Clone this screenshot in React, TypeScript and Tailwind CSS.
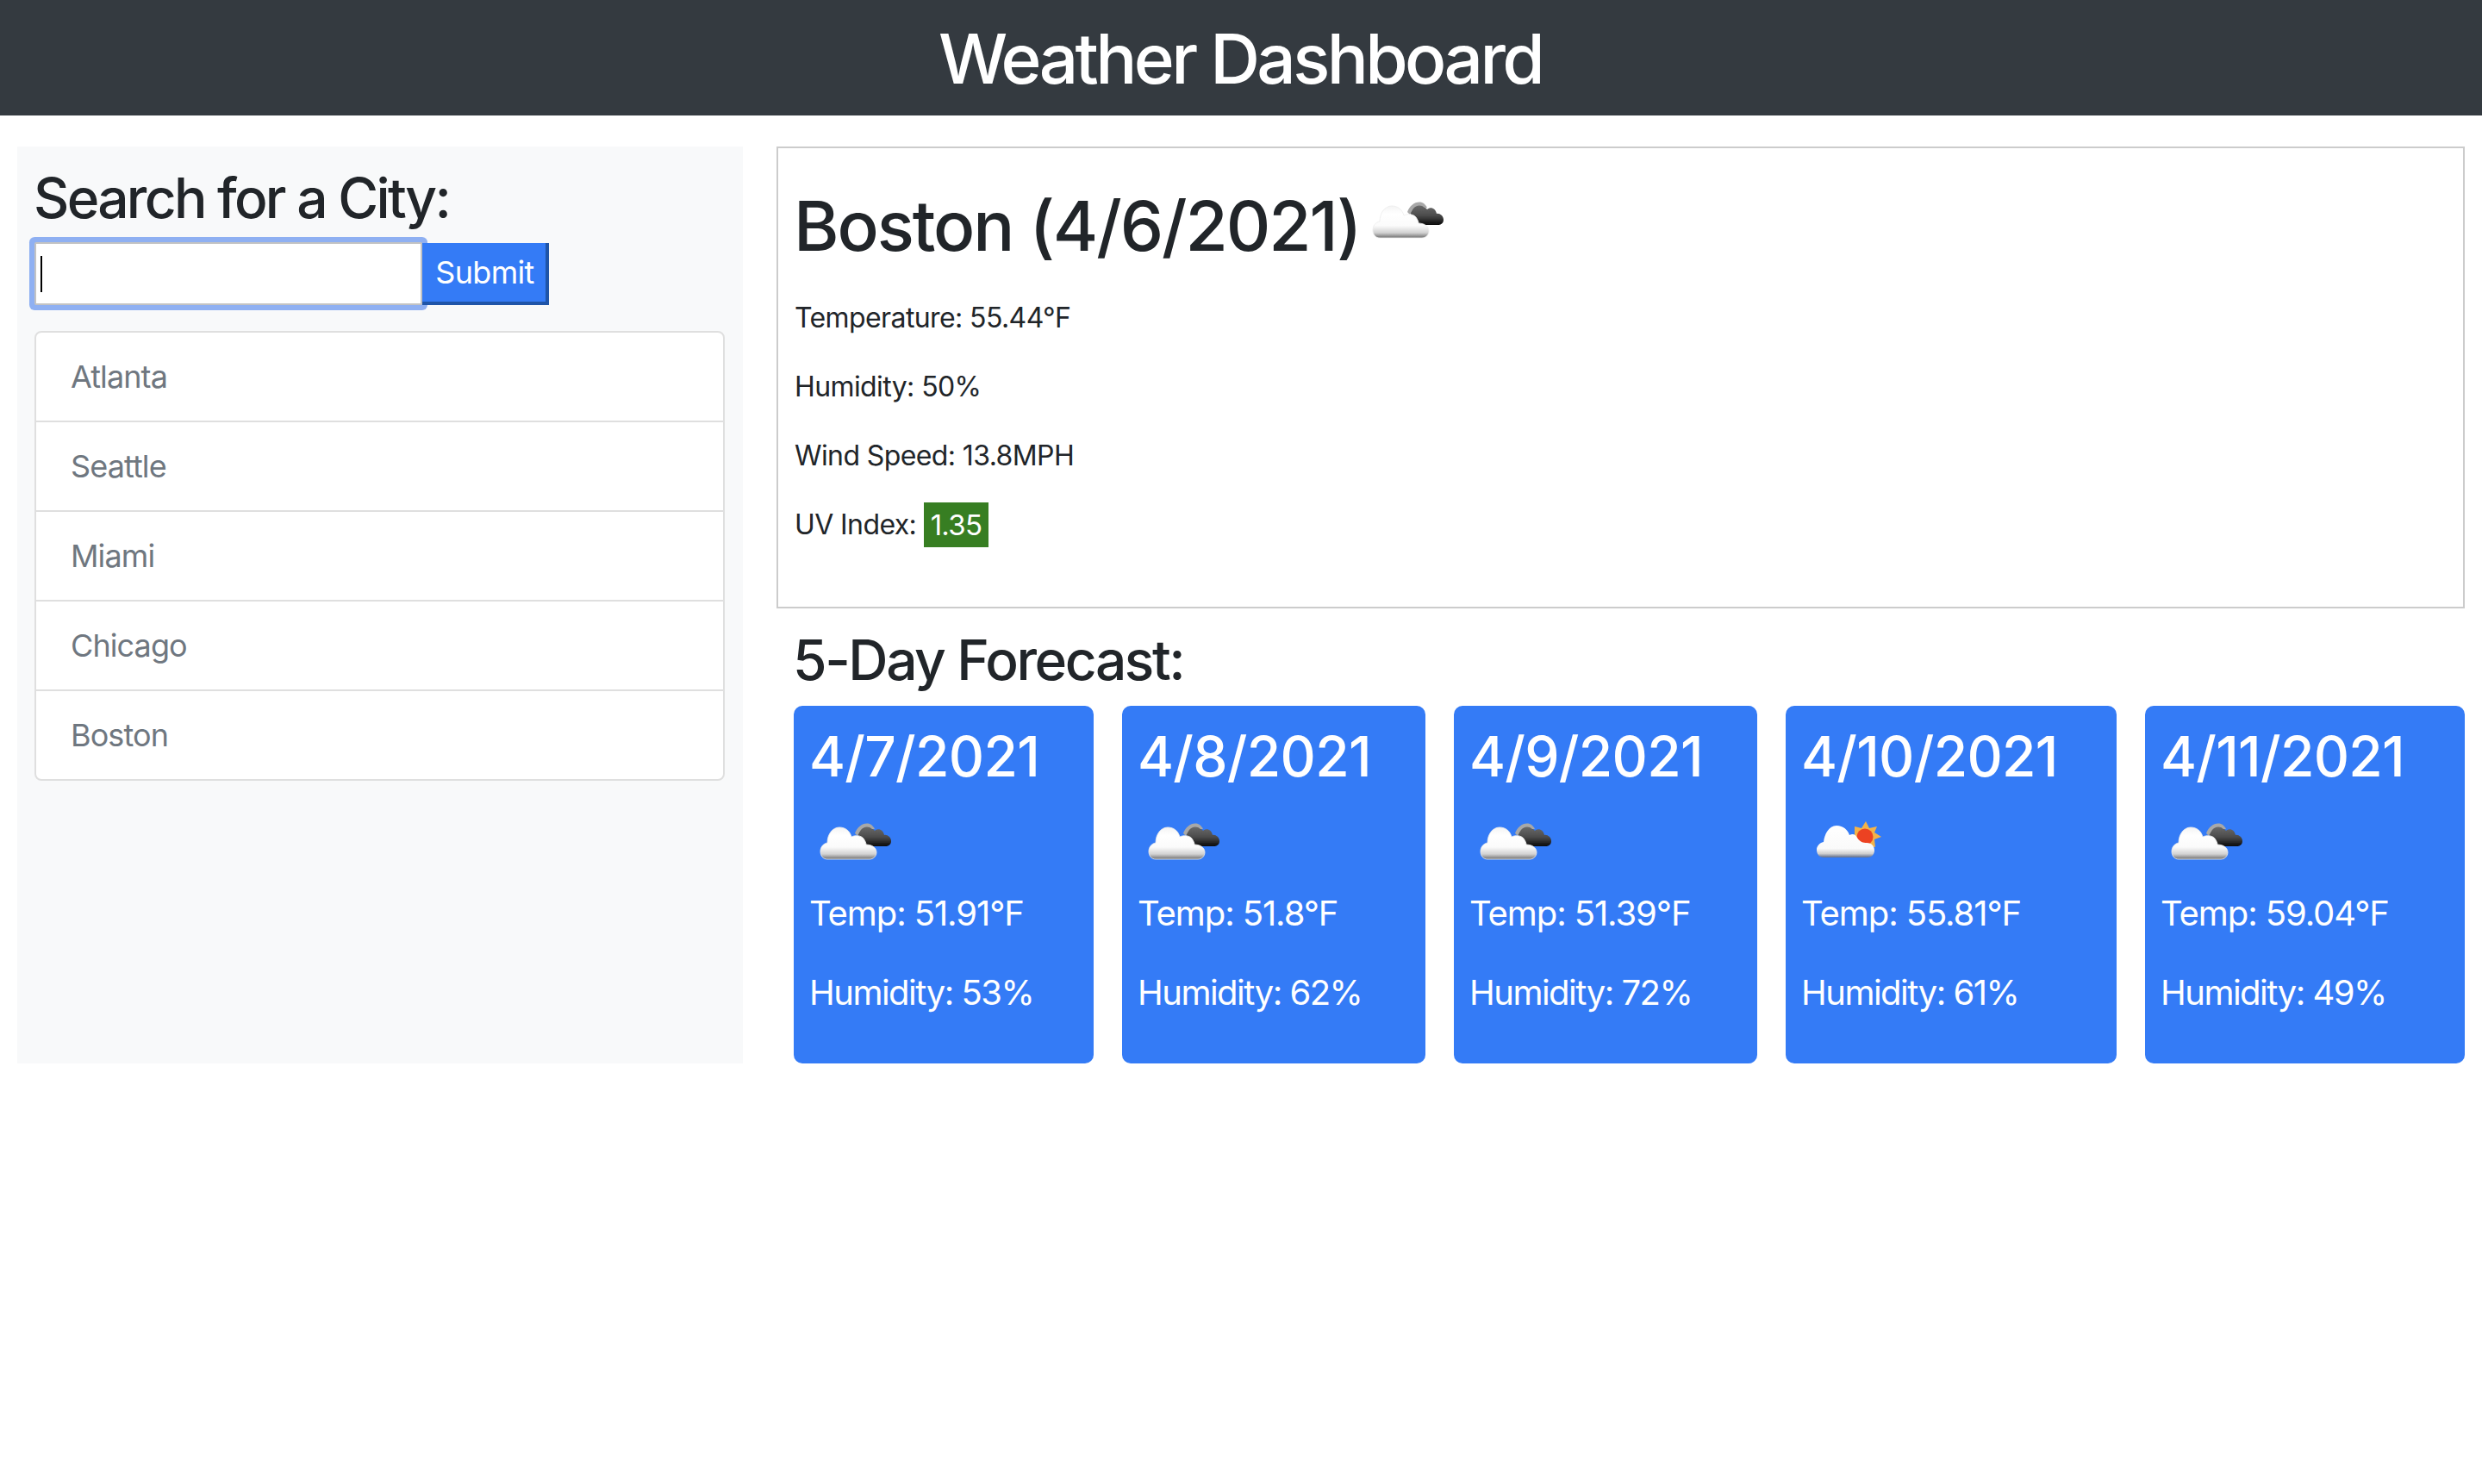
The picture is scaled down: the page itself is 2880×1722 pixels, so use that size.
import React from "react";

const font = { fontFamily: "Inter, 'Liberation Sans', sans-serif" };

function NightCloudIcon() {
  return (
    <svg width="100" height="100" viewBox="0 0 100 100" className="block shrink-0">
      <defs>
        <linearGradient id="wc" x1="0" y1="0" x2="0" y2="1">
          <stop offset="0" stopColor="#f4f4f4" />
          <stop offset="0.25" stopColor="#ffffff" />
          <stop offset="0.62" stopColor="#fbfbfb" />
          <stop offset="0.84" stopColor="#d2d2d2" />
          <stop offset="1" stopColor="#707070" />
        </linearGradient>
        <linearGradient id="dc" x1="0" y1="0" x2="0" y2="1">
          <stop offset="0" stopColor="#6e6e6e" />
          <stop offset="0.55" stopColor="#4c4c4c" />
          <stop offset="1" stopColor="#0a0a0a" />
        </linearGradient>
        <filter id="bl" x="-10%" y="-10%" width="120%" height="120%">
          <feGaussianBlur stdDeviation="0.7" />
        </filter>
      </defs>
      <g filter="url(#bl)">
        <path d="M56 38 C57 30 65 25 71 29 C73 31 75 33 76 34 C80 30 86 33 87 39 C90 38 95 41 95 46 C95 50 92 52 88 52 L66 52 Z" fill="url(#dc)" />
        <path d="M53 37 C56 29 63 24 70 26 C73 27 75 30 76 32 L73 32 C69 28 63 29 60 33 C58 36 57 38 56 40 Z" fill="#a8a8a8" />
        <path d="M21 67 C16 67 13 63 13 58 C13 53 16 49 21 48 C21 38 27 30 35 30 C42 30 47 34 49 41 C53 39 60 39 63 43 C65 46 66 48 66 50 C72 50 78 53 78 59 C78 64 74 67 70 67 Z" fill="url(#wc)" stroke="#ececec" strokeWidth="0.8" />
      </g>
    </svg>
  );
}

function SunCloudIcon() {
  return (
    <svg width="100" height="100" viewBox="0 0 100 100" className="block shrink-0">
      <defs>
        <linearGradient id="wc2" x1="0" y1="0" x2="0" y2="1">
          <stop offset="0" stopColor="#ffffff" />
          <stop offset="0.72" stopColor="#fafafa" />
          <stop offset="0.88" stopColor="#cfcfcf" />
          <stop offset="1" stopColor="#5d6b88" />
        </linearGradient>
        <filter id="bl2" x="-10%" y="-10%" width="120%" height="120%">
          <feGaussianBlur stdDeviation="0.7" />
        </filter>
      </defs>
      <g filter="url(#bl2)">
        <path d="M75 23 L79 31 L88 29 L85 36 L93 41 L85 44 L86 53 L70 50 L62 40 L62 29 L70 31 Z" fill="#f3b34a" />
        <circle cx="74" cy="41" r="9.5" fill="#ec4323" />
        <path d="M26 65 C21 65 18 61 18 56 C18 52 21 48 26 47 C27 38 32 28 41 28 C49 28 54 33 56 39 C60 37 63 38 65 42 C68 47 72 48 76 48 C82 48 85 52 85 57 C85 62 81 65 77 65 Z" fill="url(#wc2)" />
      </g>
    </svg>
  );
}

const cities = ["Atlanta", "Seattle", "Miami", "Chicago", "Boston"];

const forecast = [
  { date: "4/7/2021", temp: "51.91", hum: "53", sun: false },
  { date: "4/8/2021", temp: "51.8", hum: "62", sun: false },
  { date: "4/9/2021", temp: "51.39", hum: "72", sun: false },
  { date: "4/10/2021", temp: "55.81", hum: "61", sun: true },
  { date: "4/11/2021", temp: "59.04", hum: "49", sun: false },
];

export default function App() {
  return (
    <div style={font} className="min-h-[1722px] bg-white text-[#212529] text-[32px] leading-[48px] tracking-[-0.6px]">
      <header className="h-[134px] bg-[#343a40] pt-[20px] pr-[2px] text-center text-white">
        <h1 className="text-[80px] leading-[96px] font-medium tracking-[-3.6px]">Weather Dashboard</h1>
      </header>

      <div className="flex pl-[20px] pr-[20px] mt-[36px]">
        <aside className="w-[842px] h-[1064px] bg-[#f8f9fa] pl-[21px] pr-[20px] pt-[21px]">
          <h2 className="-ml-[2px] text-[64px] leading-[77px] font-medium tracking-[-2.7px]">Search for a City:</h2>
          <div className="mt-[13px] flex items-end">
            <div className="relative h-[73px] w-[450px] -ml-px bg-white border-2 border-[#c3c3c3] shadow-[0_0_0_6px_#8fb0f2] rounded-[2px]">
              <span className="absolute left-[5px] top-[14px] h-[42px] w-[2px] bg-black" />
            </div>
            <button className="relative h-[72px] w-[147px] bg-[#347bf6] pl-[2px] text-white text-[36px] leading-[54px] border-r-[4px] border-b-[4px] border-r-[#1f55a8] border-b-[#1f55a8] tracking-[-0.7px]">
              Submit
            </button>
          </div>
          <ul className="mt-[30px] w-[801px] rounded-[8px] border-2 border-[#dfdfdf] bg-white -ml-px">
            {cities.map((c, i) => (
              <li
                key={c}
                className={
                  i === 0
                    ? "h-[102px] flex items-center pl-[40px] text-[36px] text-[#6f7780] tracking-[-0.9px]"
                    : "h-[104px] flex items-center pl-[40px] text-[36px] text-[#6f7780] tracking-[-0.9px] border-t-2 border-[#dfdfdf]"
                }
              >
                {c}
              </li>
            ))}
          </ul>
        </aside>

        <main className="flex-1 ml-[39px] min-w-0">
          <section className="h-[536px] border-2 border-[#cccccc] pl-[19px] pt-[42px]">
            <div className="flex items-start h-[96px]">
              <h1 className="-ml-[1px] text-[80px] leading-[96px] font-medium tracking-[-2.1px]">Boston (4/6/2021)</h1>
              <div className="mt-[-5px] ml-[2px]"><NightCloudIcon /></div>
            </div>
            <div className="mt-[35px] flex flex-col gap-[32px]">
              <p>Temperature: 55.44°F</p>
              <p>Humidity: 50%</p>
              <p>Wind Speed: 13.8MPH</p>
              <p>
                UV Index: <span className="inline-block h-[52px] bg-[#377e22] px-[8px] text-[33px] leading-[52px] text-white align-middle -mt-[4px] tracking-[-0.7px]">1.35</span>
              </p>
            </div>
          </section>

          <div className="pl-[20px]">
            <h2 className="-ml-[1px] mt-[21px] mb-[15px] text-[64px] leading-[77px] font-medium tracking-[-2.4px]">5-Day Forecast:</h2>
            <div className="grid grid-cols-[348px_352px_352px_384px_371px] gap-[33px]">
              {forecast.map((d) => (
                <article key={d.date} className="h-[415px] rounded-[10px] bg-[#347bf6] pl-[18px] pt-[20px] text-white text-[40px] leading-[60px] tracking-[-1.1px]">
                  <h2 className="text-[64px] leading-[77px] font-medium tracking-[-0.7px]">{d.date}</h2>
                  <div className="mt-[14px]">{d.sun ? <SunCloudIcon /> : <NightCloudIcon />}</div>
                  <p>Temp: {d.temp}°F</p>
                  <p className="mt-[32px] tracking-[-1.5px]">Humidity: {d.hum}%</p>
                </article>
              ))}
            </div>
          </div>
        </main>
      </div>
    </div>
  );
}
